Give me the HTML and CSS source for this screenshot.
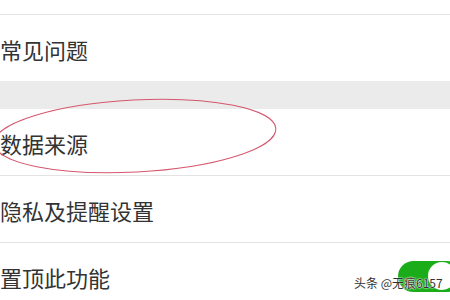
FILE: index.html
```html
<!DOCTYPE html>
<html lang="zh">
<head>
<meta charset="utf-8">
<link rel="stylesheet" href="styles.css">
</head>
<body>
<div class="list">
  <div class="top"></div>
  <div class="row">常见问题</div>
  <div class="band"></div>
  <div class="row line">数据来源</div>
  <div class="row line">隐私及提醒设置</div>
  <div class="row">
    <span>置顶此功能</span>
    <span class="toggle"><span class="knob"></span></span>
  </div>
</div>
<svg class="mark" width="300" height="110" viewBox="0 0 300 110">
  <ellipse cx="145" cy="47" rx="141" ry="36" transform="rotate(-3 145 47)" fill="none" stroke="#d4576e" stroke-width="1"/>
</svg>
<div class="wm">头条 @无痕6157</div>
</body>
</html>
```

FILE: styles.css
```css
html, body {
  margin: 0;
  padding: 0;
  background: #fff;
  overflow: hidden;
  width: 450px;
  height: 300px;
}
body {
  position: relative;
  font-family: "Noto Sans CJK SC", "Noto Sans", sans-serif;
  color: #333;
}
.list {
  display: flex;
  flex-direction: column;
}
.top {
  height: 14px;
  border-bottom: 1px solid #e3e3e3;
}
.row {
  height: 66px;
  display: flex;
  align-items: center;
  justify-content: space-between;
  font-size: 22px;
  line-height: 1;
  padding-top: 2px;
  box-sizing: border-box;
}
.row.line {
  height: 67px;
  border-bottom: 1px solid #e3e3e3;
}
.band {
  height: 28px;
  background: #ebebeb;
}
.toggle {
  width: 64px;
  height: 31px;
  border-radius: 16px;
  background: #1aad19;
  margin-right: -12px;
  display: flex;
  align-items: center;
  justify-content: flex-end;
  padding-right: 2px;
  box-sizing: border-box;
  margin-top: -2px;
}
.knob {
  width: 28px;
  height: 28px;
  border-radius: 50%;
  background: #fff;
  margin-right: 4px;
}
.mark {
  position: absolute;
  left: -10px;
  top: 89px;
}
.wm {
  position: absolute;
  left: 354px;
  top: 275px;
  font-size: 12px;
  line-height: 16px;
  color: #333;
  text-shadow: 0 0 2px #fff, 0 0 1px #fff, 0 0 1px #fff;
}
```
